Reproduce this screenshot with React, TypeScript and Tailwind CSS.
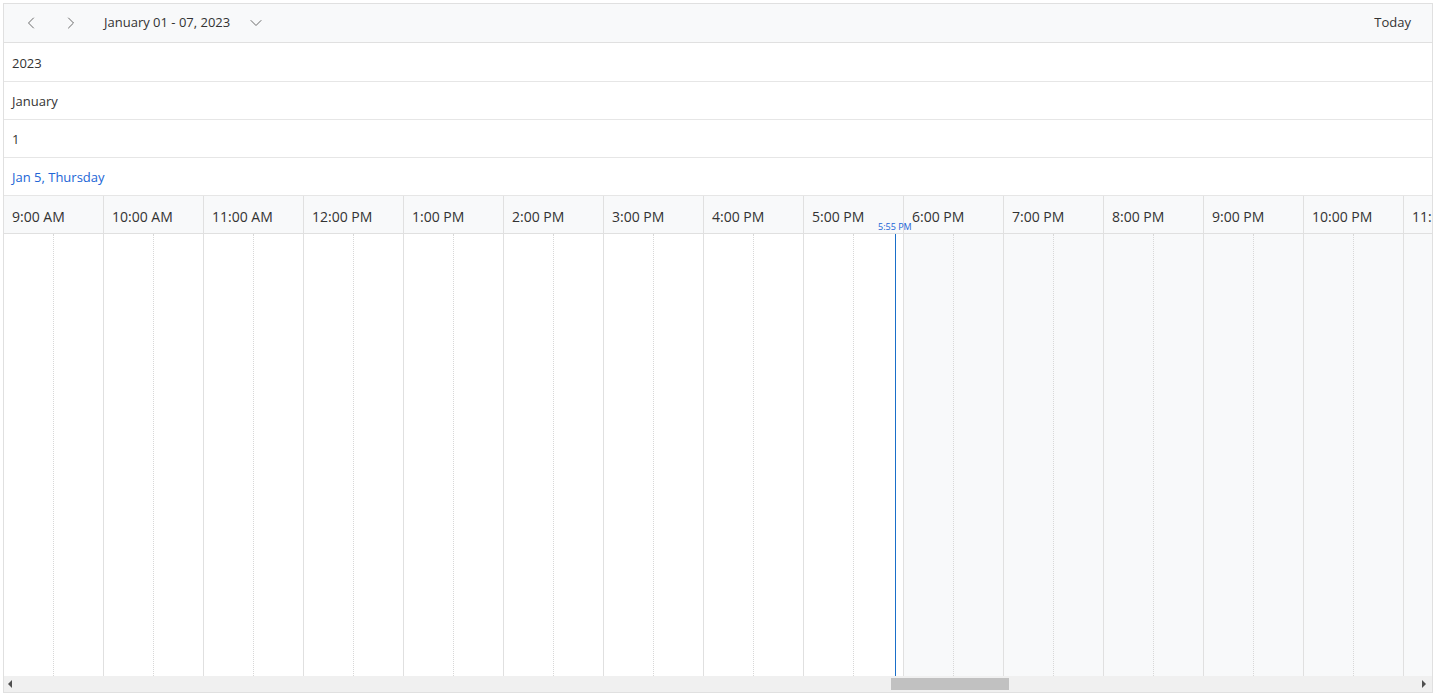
import { ChevronLeft, ChevronRight, ChevronDown } from "lucide-react";

const hours = [
  "9:00 AM", "10:00 AM", "11:00 AM", "12:00 PM", "1:00 PM", "2:00 PM", "3:00 PM", "4:00 PM",
  "5:00 PM", "6:00 PM", "7:00 PM", "8:00 PM", "9:00 PM", "10:00 PM", "11:00 PM",
];

const HeaderRow = ({ text, blue, tall }: { text: string; blue?: boolean; tall?: boolean }) => (
  <div
    className={
      "shrink-0 flex items-center pl-[8px] pt-[3px] border-b border-[#e6e6e6] text-[13px] " +
      (tall ? "h-[39px] " : "h-[38px] ") +
      (blue ? "text-[#2165d6]" : "text-[#333]")
    }
  >
    {text}
  </div>
);

const App = () => {
  return (
    <div className="w-[1436px] h-[698px] bg-white pt-[3px] pl-[3px]" style={{ fontFamily: '"Open Sans", "Noto Sans", sans-serif' }}>
      <div className="w-[1430px] h-[690px] border border-[#e0e0e0] flex flex-col overflow-hidden">
        {/* toolbar */}
        <div className="h-[39px] shrink-0 bg-[#f8f9fa] border-b border-[#e0e0e0] flex items-center">
          <div className="w-[38px] ml-[8px] flex justify-center text-[#6b6b6b]">
            <ChevronLeft size={20} strokeWidth={1.2} />
          </div>
          <div className="w-[38px] ml-[2px] flex justify-center text-[#6b6b6b]">
            <ChevronRight size={20} strokeWidth={1.2} />
          </div>
          <span className="ml-[14px] text-[13px] text-[#333]">January 01 - 07, 2023</span>
          <ChevronDown size={20} strokeWidth={1.2} className="ml-[16px] text-[#6b6b6b]" />
          <span className="ml-auto mr-[21px] text-[13px] text-[#333]">Today</span>
        </div>
        <HeaderRow text="2023" tall />
        <HeaderRow text="January" />
        <HeaderRow text="1" />
        <HeaderRow text="Jan 5, Thursday" blue />
        {/* time header */}
        <div className="h-[38px] shrink-0 flex border-b border-[#e0e0e0] bg-[#f8f9fa] relative">
          {hours.map((h, i) => (
            <div key={i} className="w-[100px] shrink-0 border-r border-[#e0e0e0] flex items-center pl-[8px] pt-[3px] text-[14px] text-[#333]">
              {h}
            </div>
          ))}
          <span className="absolute left-[874px] top-[26px] text-[9px] leading-none text-[#2165d6]">5:55 PM</span>
        </div>
        {/* content grid */}
        <div className="flex-1 flex relative overflow-hidden">
          {hours.map((_, i) => (
            <div key={i} className={"w-[100px] shrink-0 flex border-r border-[#e0e0e0] " + (i >= 9 ? "bg-[#f8f9fa]" : "bg-white")}>
              <div className="w-[50px] border-r border-dotted border-[#d8d8d8]" />
              <div className="w-[50px]" />
            </div>
          ))}
          <div className="absolute left-[891px] top-0 bottom-0 w-px bg-[#1a6fc9]" />
        </div>
        {/* scrollbar */}
        <div className="h-[16px] shrink-0 bg-[#f0f0f0] flex items-center relative">
          <span className="ml-[4px] w-0 h-0 border-y-[4px] border-y-transparent border-r-[4px] border-r-[#505050]" />
          <div className="absolute left-[887px] top-[2px] w-[118px] h-[12px] bg-[#c1c1c1]" />
          <span className="ml-auto mr-[6px] w-0 h-0 border-y-[4px] border-y-transparent border-l-[4px] border-l-[#505050]" />
        </div>
      </div>
    </div>
  );
};

export default App;
